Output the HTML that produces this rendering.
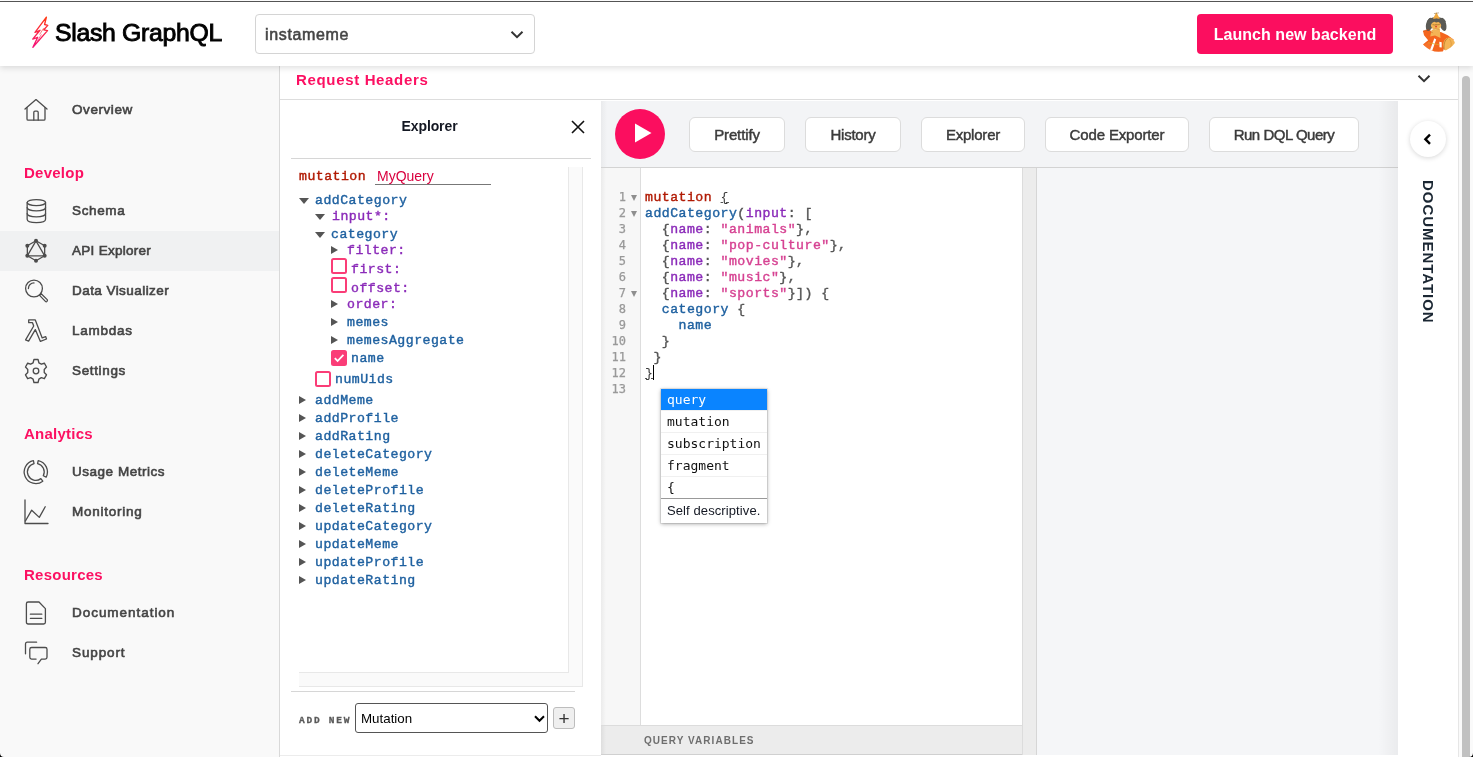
<!DOCTYPE html>
<html lang="en">
<head>
<meta charset="utf-8">
<title>Slash GraphQL</title>
<style>
*{box-sizing:border-box;margin:0;padding:0}
html,body{width:1473px;height:757px;overflow:hidden;background:#fff}
body{position:relative;font-family:"Liberation Sans",sans-serif;color:#444;}
.abs{position:absolute}
#topline{left:0;top:1px;width:1473px;height:1px;background:#575757}
/* header */
#header{left:0;top:2px;width:1473px;height:64px;background:#fff;box-shadow:0 2px 6px rgba(0,0,0,.13);z-index:10}
#brand{left:55px;top:15px;font-size:24.8px;line-height:32px;font-weight:normal;-webkit-text-stroke:.9px #000;color:#000;white-space:nowrap;letter-spacing:-.3px}
#bsel{left:255px;top:12px;width:280px;height:40px;border:1px solid #d4d4d4;border-radius:4px;background:#fff}
#bsel span{position:absolute;left:9px;top:10px;font-size:16px;line-height:20px;color:#444;font-weight:normal;-webkit-text-stroke:.55px #444;letter-spacing:.65px;white-space:nowrap}
#launch{left:1197px;top:12px;width:196px;height:40px;border-radius:4px;background:#fb0e5f;color:#fff;font-weight:bold;font-size:16px;line-height:42px;text-align:center;letter-spacing:.05px}
/* sidebar */
#sidebar{left:0;top:66px;width:280px;height:691px;background:#f9f9f9;border-right:1px solid #d9d9d9}
.sec{position:absolute;left:24px;font-size:15px;letter-spacing:.25px;line-height:20px;color:#fc1062;font-weight:bold;white-space:nowrap}
.item{position:absolute;left:0;width:279px;height:40px}
.item.act{background:#f0f1f2}
.item span{position:absolute;left:72px;top:11px;font-size:13.5px;line-height:18px;color:#444;font-weight:normal;-webkit-text-stroke:.6px #444;white-space:nowrap}
.item svg{position:absolute;left:22px;top:6px;width:28px;height:28px;fill:none;stroke:#4c4c4c;stroke-width:1.3;stroke-linecap:round;stroke-linejoin:round}
/* main */
#reqh{left:280px;top:66px;width:1178px;height:34px;background:#fff;border-bottom:1px solid #ddd}
#reqh span{position:absolute;left:16px;top:4px;font-size:15px;line-height:20px;font-weight:bold;color:#fc1062;letter-spacing:.66px;white-space:nowrap}

/* explorer */
#expl{left:280px;top:100px;width:321px;height:655px;background:#fff}
#bottomline{left:280px;top:755px;width:321px;height:1px;background:#ececec}
#expl-title{left:0;top:16px;width:299px;letter-spacing:-.1px;text-align:center;font-size:14px;line-height:20px;font-weight:bold;color:#141823}
#expl-div{left:11px;top:58px;width:300px;height:1px;background:#d6d6d6}
#vtrack{left:288px;top:67px;width:15px;height:506px;background:#fafafa;border-left:1px solid #e8e8e8;border-right:1px solid #e8e8e8}
#htrack{left:19px;top:572px;width:284px;height:15px;background:#fafafa;border-bottom:1px solid #e8e8e8;border-right:1px solid #e8e8e8}
#htrack i{position:absolute;left:0;top:0;width:270px;height:1px;background:#e8e8e8}
#tree{left:0;top:0;font-family:"Liberation Mono",monospace;font-size:13.2px;letter-spacing:.48px;line-height:18px;white-space:pre}
#tree div{position:absolute;white-space:pre;height:18px;margin-top:1px;-webkit-text-stroke:.4px}
#tree #opname{margin-top:0;-webkit-text-stroke:0;letter-spacing:0}
#tree .f{color:#1f61a0}
#tree .a{color:#8b2bb9}
#tree .k{color:#b11a04}
.tri{position:absolute;width:0;height:0;border-style:solid}
.tri.d{border-width:6.5px 5px 0 5px;margin-left:-.5px;border-color:#555 transparent transparent transparent}
.tri.r{border-width:4.7px 0 4.7px 7.2px;margin-top:-.2px;border-color:transparent transparent transparent #555}
.cb{position:absolute;width:16px;height:16px;border:2px solid #fa3d77;border-radius:2.5px;background:#fff}
.cb.on{background:#fa3d77}
#opname{left:95px;top:67px;width:116px;height:19px;border-bottom:1px solid #777;font-family:"Liberation Sans",sans-serif;font-size:14px;line-height:18px;color:#d9003f;padding-left:2px}
#foot-div{left:11px;top:591px;width:284px;height:1px;background:#d6d6d6}
#addnew{left:19px;top:613px;font-family:"Liberation Mono",monospace;font-weight:bold;font-size:9.5px;line-height:16px;letter-spacing:1.75px;color:#5a5a5a;-webkit-text-stroke:.3px;white-space:pre}
#msel{left:75px;top:603px;width:193px;height:30px;border:1px solid #555;border-radius:3px;background:#fff}
#msel span{position:absolute;left:5px;top:6px;font-size:13.33px;line-height:18px;color:#000}
#plus{left:273px;top:607px;width:22px;height:22px;border:1px solid #bdbdbd;border-radius:3px;background:#efefef;color:#333;font-size:19px;line-height:21px;text-align:center}
/* editor */
#toolbar{left:601px;top:101px;width:797px;height:67px;background:linear-gradient(90deg,#e9eaec 0,#f3f4f6 6px);border-bottom:1px solid #d3d3d3}
#play{left:14px;top:8px;width:50px;height:50px;border-radius:50%;background:#fb0e5f}
.tb{position:absolute;top:16px;height:35px;border:1px solid #dcdcdc;border-radius:6px;background:#fff;font-size:15px;line-height:34px;text-align:center;color:#3b3b3b;-webkit-text-stroke:.45px #3b3b3b}
#gutter{left:601px;top:168px;width:40px;height:557px;background:linear-gradient(90deg,#ebebeb 0,#f7f7f7 5px);border-right:1px solid #ddd}
#qed{left:641px;top:168px;width:381px;height:557px;background:#fff}
#strip{left:1022px;top:168px;width:15px;height:587px;background:#ececec;border-right:1px solid #d6d6d6;border-left:1px solid #dcdcdc}
#result{left:1037px;top:168px;width:361px;height:587px;background:#f5f6f8}
#vars{left:601px;top:725px;width:421px;height:30px;background:linear-gradient(90deg,#dedede 0,#ececec 5px);border-top:1px solid #dcdcdc;border-bottom:1px solid #d0d0d0}
#vars span{position:absolute;left:43px;top:9px;font-size:10px;line-height:12px;font-weight:bold;letter-spacing:1.05px;color:#6e6e6e}
#ln{left:601px;top:189px;width:25px;-webkit-text-stroke:.25px;text-align:right;font-family:"DejaVu Sans Mono",monospace;font-size:12px;letter-spacing:0;line-height:16px;color:#999;white-space:pre}
#code{left:645px;top:190px;font-family:"Liberation Mono",monospace;font-size:13.2px;letter-spacing:.48px;line-height:16px;color:#555;white-space:pre;-webkit-text-stroke:.4px}
#code .mb{-webkit-text-stroke:0;color:#3a3a3a;text-decoration:underline;text-decoration-thickness:1px;text-underline-offset:1px;text-decoration-color:#555}
#code .k{color:#b11a04}#code .f{color:#1f61a0}#code .a{color:#8b2bb9}#code .s{color:#d64292}
.fold{position:absolute;left:631px;width:0;height:0;border-style:solid;border-width:6.5px 3px 0 3px;border-color:#8e8e8e transparent transparent transparent}
#cursor{left:653px;top:365px;width:1px;height:15px;background:#000}
#hints{left:661px;top:389px;width:106px;height:134px;background:#fff;box-shadow:0 0 0 1px rgba(0,0,0,.07),0 1px 4px rgba(0,0,0,.35);font-family:"DejaVu Sans Mono",monospace;font-size:13px;color:#101010}
#hints div{position:absolute;left:0;width:106px;height:22px;line-height:21px;padding-left:6px;border-top:1px solid #f0f0f0;white-space:pre}
#hints .sel{background:#0a84ff;color:#fff;border-top:0;height:21px;line-height:21px}
#hints .info{font-family:"Liberation Sans",sans-serif;font-size:13px;color:#141823;border-top:1px solid #999;height:25px;line-height:23px;letter-spacing:.1px}
/* doc bar */
#docbar{left:1398px;top:101px;width:60px;height:654px;background:#fff}
#docbtn{left:12px;top:20px;width:36px;height:36px;border-radius:50%;background:#fff;box-shadow:0 1px 5px rgba(0,0,0,.16)}
#doctxt{left:39px;top:79px;transform-origin:0 0;transform:rotate(90deg);font-size:15px;line-height:18px;font-weight:bold;letter-spacing:.96px;color:#1b2733;white-space:nowrap}
#sb{left:1458px;top:66px;width:15px;height:691px;background:#fafafa;border-left:1px solid #e6e6e6}
#sbthumb{left:3px;top:10px;width:8px;height:700px;border-radius:4px;background:#c1c1c1}
</style>
</head>
<body><div id="root" style="position:absolute;left:0;top:0;width:1473px;height:757px;will-change:transform">
<div id="topline" class="abs"></div>

<div id="header" class="abs">
  <svg class="abs" style="left:31px;top:14px" width="18" height="34" viewBox="0 0 18 34">
    <defs><linearGradient id="lg" x1="0" y1="0" x2="0" y2="1"><stop offset="0" stop-color="#ff3a12"/><stop offset="1" stop-color="#f5127e"/></linearGradient></defs>
    <path d="M15.4 1.2 L4 16.4 L9 14.3 L1.7 23.1 L6.7 21.3 L1.9 31.3 L16.5 14.6 L12.8 13.8 L16.8 9.4 L13.6 8.5 Z" fill="none" stroke="url(#lg)" stroke-width="1.35" stroke-linejoin="round"/>
    <path d="M12.6 12.2 L8.6 18.6 M10.4 18.4 L6.2 25.4" fill="none" stroke="url(#lg)" stroke-width=".9" opacity=".7"/>
  </svg>
  <div id="brand" class="abs">Slash GraphQL</div>
  <div id="bsel" class="abs"><span>instameme</span>
    <svg class="abs" style="left:254px;top:15px" width="14" height="10" viewBox="0 0 14 10"><path d="M1.5 1.8 L7 7.2 L12.5 1.8" fill="none" stroke="#333" stroke-width="2"/></svg>
  </div>
  <div id="launch" class="abs">Launch new backend</div>
  <svg class="abs" style="left:1412px;top:4px" width="52" height="52" viewBox="0 0 757 757">
    <defs><clipPath id="avc"><circle cx="385" cy="374" r="291"/></clipPath></defs>
    <g clip-path="url(#avc)">
      <path d="M160 365 L245 340 L300 395 L420 380 L520 425 L610 490 L480 560 L450 670 L300 670 L255 565 L140 575 L235 500 L175 425 Z" fill="#f4651e"/>
      <path d="M140 575 L250 525 L295 650 L190 640 Z" fill="#f6722a"/>
      <ellipse cx="540" cy="565" rx="88" ry="105" fill="#f4b455"/>
      <path d="M470 640 C455 560 480 490 520 470" fill="none" stroke="#a86a1c" stroke-width="9"/>
      <path d="M545 480 C575 520 580 560 560 610" fill="none" stroke="#c98a30" stroke-width="7"/>
      <path d="M285 350 L405 335 L415 465 L335 430 L265 445 Z" fill="#f4b455"/>
      <path d="M325 468 L352 488 L292 655 L262 642 Z" fill="#fff"/>
      <path d="M398 520 L432 528 L432 605 L400 600 Z" fill="#fff"/>
      <path d="M235 535 L400 565" stroke="#d6b02a" stroke-width="10" fill="none"/>
      <ellipse cx="255" cy="268" rx="50" ry="98" transform="rotate(14 255 268)" fill="#5b5a55"/>
      <ellipse cx="452" cy="268" rx="46" ry="98" transform="rotate(-14 452 268)" fill="#5b5a55"/>
      <ellipse cx="355" cy="225" rx="135" ry="62" fill="#5b5a55"/>
      <ellipse cx="350" cy="285" rx="74" ry="58" fill="#f4b455"/>
      <path d="M355 92 L305 185 L405 185 Z" fill="#f0a93f"/>
      <path d="M320 110 L392 100" stroke="#8a6a3a" stroke-width="8" fill="none"/>
      <ellipse cx="356" cy="212" rx="34" ry="30" fill="#5b5a55"/>
      <path d="M300 270 Q330 285 352 268 Q375 285 410 262" fill="none" stroke="#8a5a1a" stroke-width="8"/>
      <ellipse cx="350" cy="298" rx="13" ry="14" fill="#d43c2c"/>
      <path d="M300 345 L345 330 L400 345" fill="none" stroke="#c98a30" stroke-width="8"/>
      <path d="M160 365 L245 340 L300 395" fill="none" stroke="#b8410c" stroke-width="7"/>
    </g>
  </svg>
</div>

<div id="sidebar" class="abs">
  <div class="item" style="top:24px"><svg viewBox="0 0 28 28"><path d="M3 13 L14 3.6 L25 13"/><path d="M5 11.6 V23 Q5 24.2 6.2 24.2 H21.8 Q23 24.2 23 23 V11.6"/><path d="M11.8 24 V16.4 Q11.8 15.2 13 15.2 H15 Q16.2 15.2 16.2 16.4 V24"/></svg><span style="letter-spacing:0.57px">Overview</span></div>
  <div class="sec" style="top:97px">Develop</div>
  <div class="item" style="top:125px"><svg viewBox="0 0 28 28"><ellipse cx="14.35" cy="5.6" rx="9.2" ry="3"/><path d="M5.15 5.6 V22.2 C5.15 24.2 9.2 25.6 14.35 25.6 C19.5 25.6 23.55 24.2 23.55 22.2 V5.6"/><path d="M5.15 10.6 C5.15 12.5 9.2 13.9 14.35 13.9 C19.5 13.9 23.55 12.5 23.55 10.6"/><path d="M5.15 16.6 C5.15 18.5 9.2 19.9 14.35 19.9 C19.5 19.9 23.55 18.5 23.55 16.6"/></svg><span style="letter-spacing:0.64px">Schema</span></div>
  <div class="item act" style="top:165px"><svg viewBox="0 0 28 28"><path d="M14 3.8 L22.66 8.8 V18.8 L14 23.8 L5.34 18.8 V8.8 Z"/><path d="M14 3.8 L22.66 18.8 H5.34 Z"/><g fill="#4c4c4c" stroke="none"><circle cx="14" cy="3.8" r="2"/><circle cx="22.66" cy="8.8" r="2"/><circle cx="22.66" cy="18.8" r="2"/><circle cx="14" cy="23.8" r="2"/><circle cx="5.34" cy="18.8" r="2"/><circle cx="5.34" cy="8.8" r="2"/></g></svg><span style="letter-spacing:0.28px">API Explorer</span></div>
  <div class="item" style="top:205px"><svg viewBox="0 0 28 28"><circle cx="12" cy="11.5" r="8.4"/><path d="M6.4 11.5 A5.6 5.6 0 0 1 12 5.9"/><path d="M17.6 18.4 L19.2 16.8 L25.2 22.6 Q25.8 23.6 25 24.4 Q24.2 25.2 23.4 24.4 Z"/></svg><span style="letter-spacing:0.44px">Data Visualizer</span></div>
  <div class="item" style="top:245px"><svg viewBox="0 0 28 28"><path d="M6.7 2.9 H13.3 L20.2 20.9 L23.7 19.6 L24.5 22 L18.4 24.4 L13.3 12.6 L6.6 24.2 L3.6 22.9 L11.7 9 L10.5 5.7 H6.7 Z"/></svg><span style="letter-spacing:0.75px">Lambdas</span></div>
  <div class="item" style="top:285px"><svg viewBox="0 0 28 28"><circle cx="14" cy="14" r="2.8"/><path d="M12 2.6 H16 L16.8 5.6 L19.2 6.9 L22.1 6 L24.2 9.5 L22 11.7 V14.5 L24.2 16.7 L22.1 20.3 L19.2 19.4 L16.8 20.8 L16 23.8 H12 L11.2 20.8 L8.8 19.4 L5.9 20.3 L3.8 16.7 L6 14.5 V11.7 L3.8 9.5 L5.9 6 L8.8 6.9 L11.2 5.6 Z" transform="translate(14 14) scale(1.03 1.08) translate(-14 -13.2)"/></svg><span style="letter-spacing:0.65px">Settings</span></div>
  <div class="sec" style="top:358px">Analytics</div>
  <div class="item" style="top:386px"><svg viewBox="0 0 28 28"><path d="M16.21 2.55 A11.60 11.60 0 0 1 24.14 19.17 L21.28 17.71 A8.40 8.40 0 0 0 15.55 5.68 Z"/><path d="M20.78 23.16 A11.60 11.60 0 1 1 11.39 2.55 L12.05 5.68 A8.40 8.40 0 1 0 18.86 20.61 Z"/></svg><span style="letter-spacing:0.52px">Usage Metrics</span></div>
  <div class="item" style="top:426px"><svg viewBox="0 0 28 28"><path d="M3 2 V25.5 H26"/><path d="M3.4 23 L9.7 12.2 L17.3 19.4 L23.2 8.8"/></svg><span style="letter-spacing:0.75px">Monitoring</span></div>
  <div class="sec" style="top:499px">Resources</div>
  <div class="item" style="top:527px"><svg viewBox="0 0 28 28"><path d="M6.2 3 H17 L23.4 9.6 V23.2 Q23.4 25 21.6 25 H6.2 Q4.4 25 4.4 23.2 V4.8 Q4.4 3 6.2 3 Z"/><path d="M8.4 15.2 H19.8 M8.4 19.4 H19.8"/></svg><span style="letter-spacing:0.96px">Documentation</span></div>
  <div class="item" style="top:567px"><svg viewBox="0 0 28 28"><path d="M3.5 14.8 V5 Q3.5 3.2 5.3 3.2 H14.6"/><path d="M14.1 20.1 H9.6 Q7.8 20.1 7.8 18.3 V10.3 Q7.8 8.5 9.6 8.5 H23.2 Q25 8.5 25 10.3 V18.3 Q25 20.1 23.2 20.1 H19.4 L16 24.7"/></svg><span style="letter-spacing:0.89px">Support</span></div>
</div>

<div id="reqh" class="abs"><span>Request Headers</span><svg class="abs" style="left:1137px;top:8px" width="14" height="10" viewBox="0 0 14 10"><path d="M1.5 1.8 L7 7.2 L12.5 1.8" fill="none" stroke="#333" stroke-width="2"/></svg></div>

<div id="expl" class="abs">
  <div id="expl-title" class="abs">Explorer</div>
  <svg class="abs" style="left:291px;top:20px" width="14" height="14" viewBox="0 0 14 14"><path d="M1 1 L13 13 M13 1 L1 13" stroke="#111" stroke-width="1.6" fill="none"/></svg>
  <div id="expl-div" class="abs"></div>
  <div id="vtrack" class="abs"></div>
  <div id="htrack" class="abs"><i></i></div>
  <div id="tree" class="abs">
    <div class="k" style="left:19px;top:67px">mutation</div>
    <div id="opname" class="abs">MyQuery</div>
    <i class="tri d" style="left:19px;top:98px"></i><div class="f" style="left:35px;top:91px">addCategory</div>
    <i class="tri d" style="left:35px;top:114px"></i><div class="a" style="left:52px;top:107px">input*:</div>
    <i class="tri d" style="left:35px;top:132px"></i><div class="f" style="left:51px;top:125px">category</div>
    <i class="tri r" style="left:51px;top:146px"></i><div class="a" style="left:67px;top:141px">filter:</div>
    <b class="cb" style="left:51px;top:158px"></b><div class="a" style="left:71px;top:160px">first:</div>
    <b class="cb" style="left:51px;top:177px"></b><div class="a" style="left:71px;top:179px">offset:</div>
    <i class="tri r" style="left:51px;top:200px"></i><div class="a" style="left:67px;top:195px">order:</div>
    <i class="tri r" style="left:51px;top:218px"></i><div class="f" style="left:67px;top:213px">memes</div>
    <i class="tri r" style="left:51px;top:236px"></i><div class="f" style="left:67px;top:231px">memesAggregate</div>
    <b class="cb on" style="left:51px;top:250px"><svg style="position:absolute;left:0;top:0" width="12" height="12" viewBox="0 0 12 12"><path d="M1.8 6.2 L4.6 9 L10.4 2.8" fill="none" stroke="#fff" stroke-width="1.8"/></svg></b><div class="f" style="left:71px;top:249px">name</div>
    <b class="cb" style="left:35px;top:271px"></b><div class="f" style="left:55px;top:270px">numUids</div>
    <i class="tri r" style="left:19px;top:296px"></i><div class="f" style="left:35px;top:291px">addMeme</div>
    <i class="tri r" style="left:19px;top:314px"></i><div class="f" style="left:35px;top:309px">addProfile</div>
    <i class="tri r" style="left:19px;top:332px"></i><div class="f" style="left:35px;top:327px">addRating</div>
    <i class="tri r" style="left:19px;top:350px"></i><div class="f" style="left:35px;top:345px">deleteCategory</div>
    <i class="tri r" style="left:19px;top:368px"></i><div class="f" style="left:35px;top:363px">deleteMeme</div>
    <i class="tri r" style="left:19px;top:386px"></i><div class="f" style="left:35px;top:381px">deleteProfile</div>
    <i class="tri r" style="left:19px;top:404px"></i><div class="f" style="left:35px;top:399px">deleteRating</div>
    <i class="tri r" style="left:19px;top:422px"></i><div class="f" style="left:35px;top:417px">updateCategory</div>
    <i class="tri r" style="left:19px;top:440px"></i><div class="f" style="left:35px;top:435px">updateMeme</div>
    <i class="tri r" style="left:19px;top:458px"></i><div class="f" style="left:35px;top:453px">updateProfile</div>
    <i class="tri r" style="left:19px;top:476px"></i><div class="f" style="left:35px;top:471px">updateRating</div>
  </div>
  <div id="foot-div" class="abs"></div>
  <div id="addnew" class="abs">ADD NEW</div>
  <div id="msel" class="abs"><span>Mutation</span><svg class="abs" style="left:178px;top:11px" width="11" height="8" viewBox="0 0 11 8"><path d="M1 1.2 L5.5 5.8 L10 1.2" fill="none" stroke="#000" stroke-width="2"/></svg></div>
  <div id="plus" class="abs">+</div>
</div>
<div id="bottomline" class="abs"></div>

<div id="toolbar" class="abs">
  <div id="play" class="abs"><svg class="abs" style="left:19px;top:13px" width="19" height="22" viewBox="0 0 19 22"><path d="M1 1.5 L17.5 11 L1 20.5 Z" fill="#fff"/></svg></div>
  <div class="tb" style="left:88px;width:96px;letter-spacing:-0.12px">Prettify</div>
  <div class="tb" style="left:204px;width:96px;letter-spacing:-0.25px">History</div>
  <div class="tb" style="left:320px;width:104px;letter-spacing:-0.22px">Explorer</div>
  <div class="tb" style="left:444px;width:144px;letter-spacing:-0.15px">Code Exporter</div>
  <div class="tb" style="left:608px;width:150px;letter-spacing:-0.48px">Run DQL Query</div>
</div>
<div id="gutter" class="abs"></div>
<div id="qed" class="abs"></div>
<div id="strip" class="abs"></div>
<div id="result" class="abs"></div>
<div id="ln" class="abs">1
2
3
4
5
6
7
8
9
10
11
12
13</div>
<i class="fold" style="top:195px"></i><i class="fold" style="top:211px"></i><i class="fold" style="top:291px"></i>
<div id="code" class="abs"><span class="k">mutation</span> <span class="mb">{</span>
<span class="f">addCategory</span>(<span class="a">input</span>: [
  {<span class="a">name</span>: <span class="s">"animals"</span>},
  {<span class="a">name</span>: <span class="s">"pop-culture"</span>},
  {<span class="a">name</span>: <span class="s">"movies"</span>},
  {<span class="a">name</span>: <span class="s">"music"</span>},
  {<span class="a">name</span>: <span class="s">"sports"</span>}]) {
  <span class="f">category</span> {
    <span class="f">name</span>
  }
 }
<span class="mb">}</span>
</div>
<div id="cursor" class="abs"></div>
<div id="vars" class="abs"><span>QUERY VARIABLES</span></div>
<div id="hints" class="abs">
  <div class="sel" style="top:0">query</div>
  <div style="top:21px">mutation</div>
  <div style="top:43px">subscription</div>
  <div style="top:65px">fragment</div>
  <div style="top:87px">{</div>
  <div class="info" style="top:109px">Self descriptive.</div>
</div>

<div class="abs" style="left:1378px;top:101px;width:20px;height:654px;background:linear-gradient(90deg,rgba(0,0,0,0),rgba(0,0,0,.045))"></div>
<div id="docbar" class="abs">
  <div id="docbtn" class="abs"><svg class="abs" style="left:12px;top:11px" width="12" height="14" viewBox="0 0 12 14"><path d="M8 2.6 L3.4 7.2 L8 11.8" fill="none" stroke="#000" stroke-width="2.4"/></svg></div>
  <div id="doctxt" class="abs">DOCUMENTATION</div>
</div>
<svg class="abs" style="left:0;top:753px;z-index:20" width="4" height="4" viewBox="0 0 4 4"><path d="M0 0 Q0.2 3.8 4 4 H0 Z" fill="#000"/></svg>
<svg class="abs" style="left:1469px;top:753px;z-index:20" width="4" height="4" viewBox="0 0 4 4"><path d="M4 0 Q3.8 3.8 0 4 H4 Z" fill="#000"/></svg>
<div id="sb" class="abs"><div id="sbthumb" class="abs"></div></div>


</div></body>
</html>
